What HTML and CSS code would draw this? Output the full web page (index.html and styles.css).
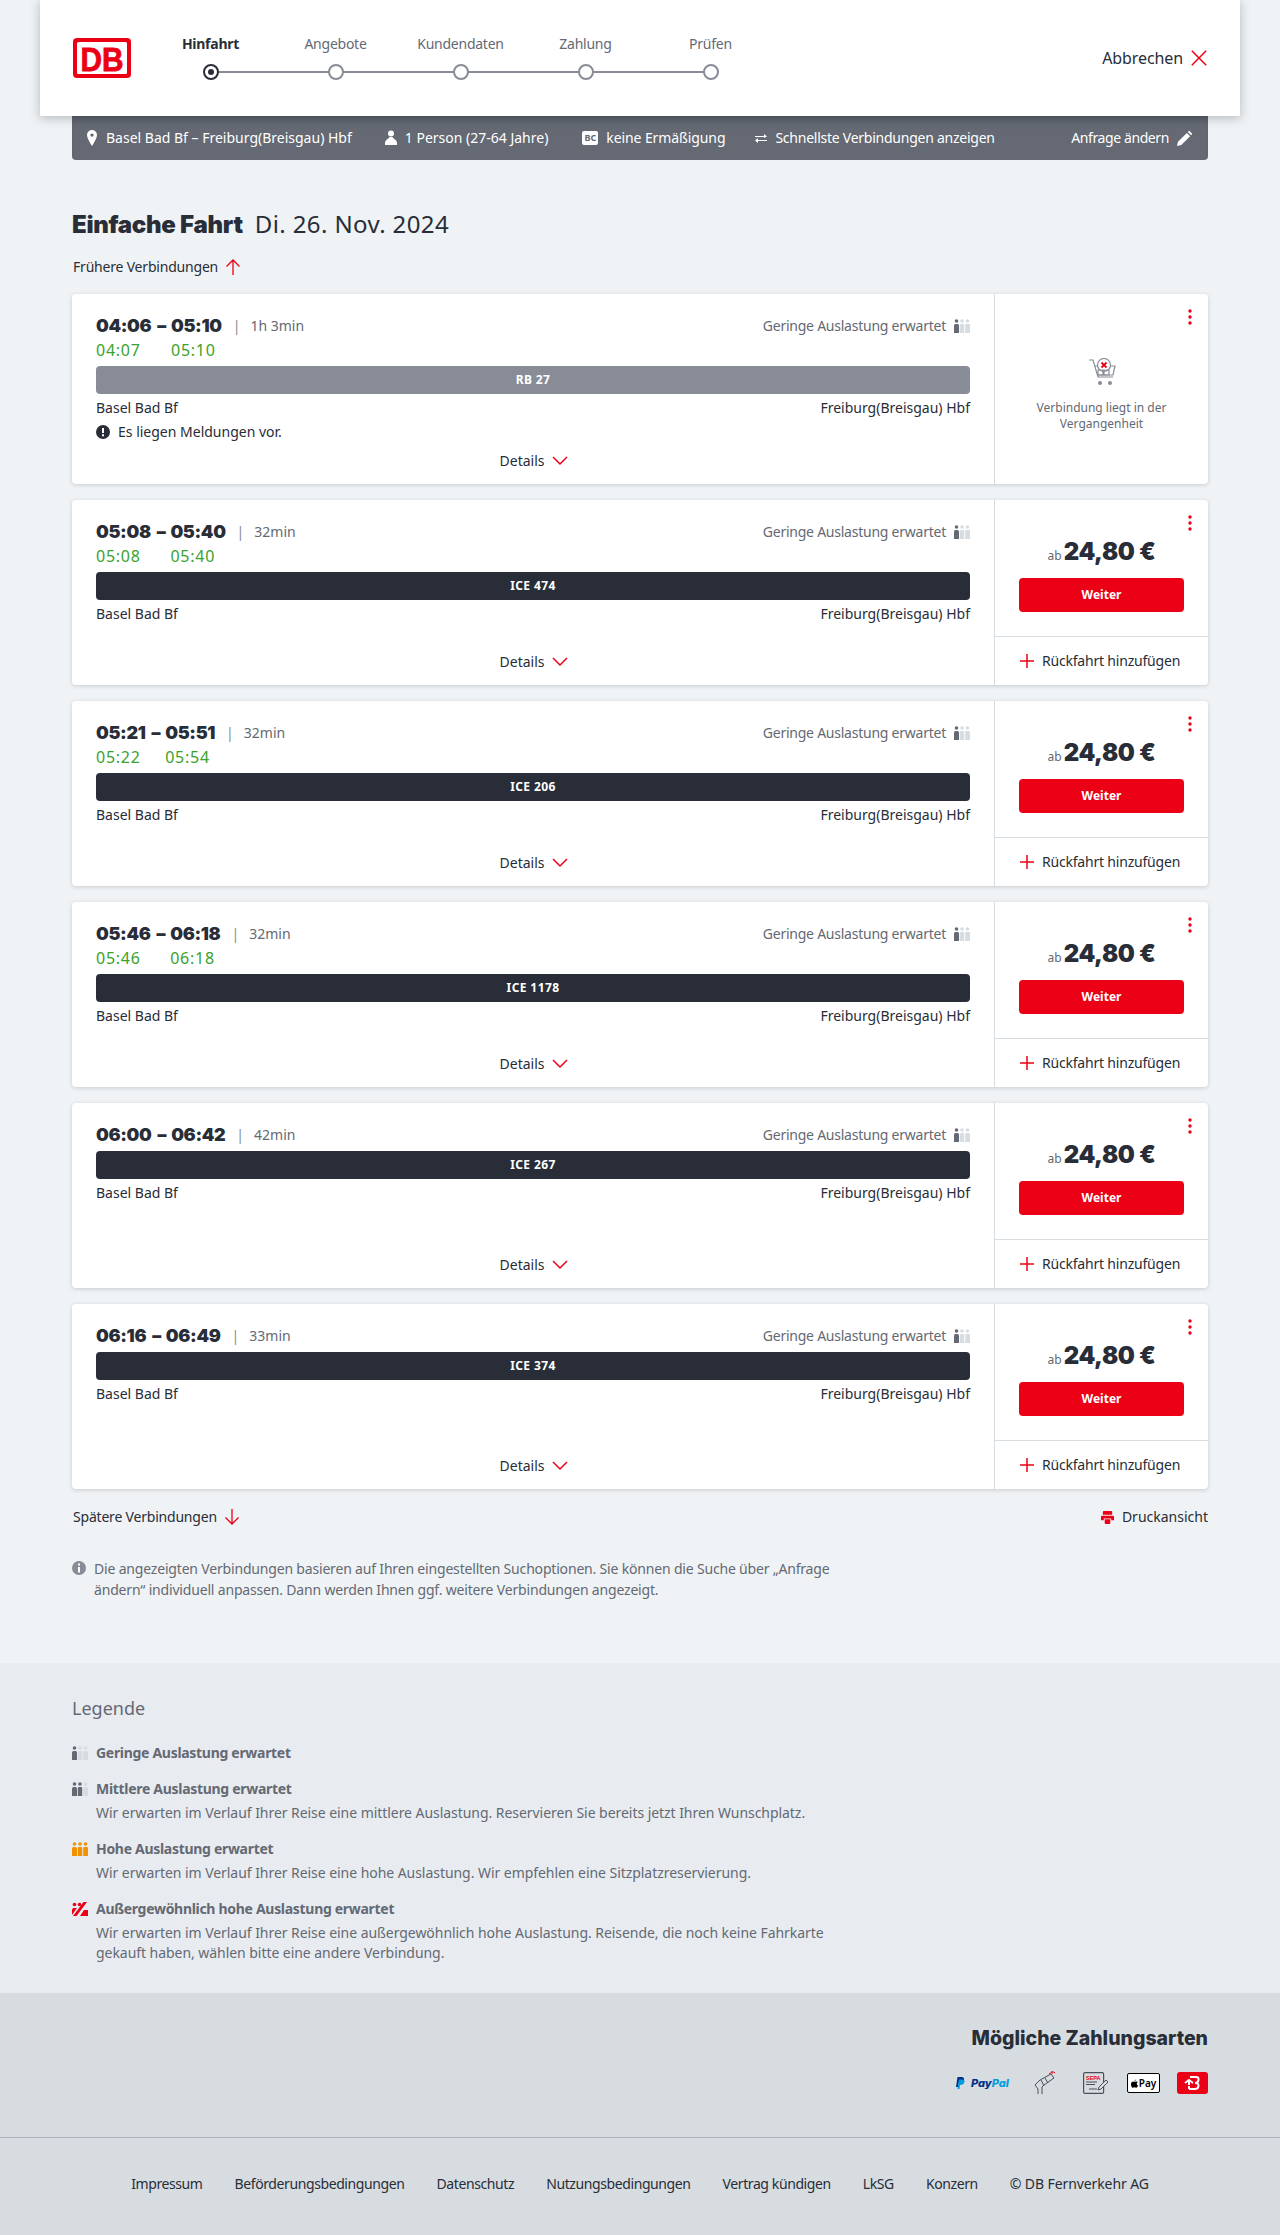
FILE: index.html
```html
<!DOCTYPE html>
<html lang="de">
<head>
<meta charset="utf-8">
<title>Verbindungen</title>
<link rel="stylesheet" href="styles.css">
</head>
<body>
<svg class="sprite" xmlns="http://www.w3.org/2000/svg">
  <symbol id="occ1" viewBox="0 0 16 14"><g fill="#646973"><circle cx="2.500" cy="2" r="1.800"/><path d="M0 6.500Q0 5 1.500 5h2Q5 5 5 6.500V14H0z"/></g><g fill="#d7dce1"><circle cx="8" cy="2" r="1.800"/><path d="M5.800 6Q5.800 5 7 5h2q1.200 0 1.200 1V14H5.800z"/><circle cx="13.500" cy="2" r="1.800"/><path d="M11.200 6q0-1 1.200-1h2.400q1.200 0 1.200 1v8h-4.800z"/></g></symbol>
  <symbol id="occ2" viewBox="0 0 16 14"><g fill="#646973"><circle cx="2.500" cy="2" r="1.800"/><path d="M0 6.500Q0 5 1.500 5h2Q5 5 5 6.500V14H0z"/><circle cx="8" cy="2" r="1.800"/><path d="M5.800 6Q5.800 5 7 5h2q1.200 0 1.200 1V14H5.800z"/></g><g fill="#d7dce1"><circle cx="13.500" cy="2" r="1.800"/><path d="M11.200 6q0-1 1.200-1h2.400q1.200 0 1.200 1v8h-4.800z"/></g></symbol>
  <symbol id="occ3" viewBox="0 0 16 14"><g fill="#f39200"><circle cx="2.500" cy="2" r="1.800"/><path d="M0 6.500Q0 5 1.500 5h2Q5 5 5 6.500V14H0z"/><circle cx="8" cy="2" r="1.800"/><path d="M5.800 6Q5.800 5 7 5h2q1.200 0 1.200 1V14H5.800z"/><circle cx="13.500" cy="2" r="1.800"/><path d="M11.200 6q0-1 1.200-1h2.400q1.200 0 1.200 1v8h-4.800z"/></g></symbol>
  <symbol id="occ4" viewBox="0 0 16 14"><g fill="#ec0016"><circle cx="2.500" cy="2.500" r="1.800"/><circle cx="7.500" cy="2.500" r="1.800"/><path d="M0 8q0-2 2-2h3L0 13z"/><path d="M1 14L11.500 0H15L4.500 14zM8 14l4-6h4v6z"/></g></symbol>
  <symbol id="chev" viewBox="0 0 16 10"><path d="M1 1l7 7 7-7" fill="none" stroke="#ec0016" stroke-width="1.500"/></symbol>
  <symbol id="plus" viewBox="0 0 14 14"><path d="M7 0v14M0 7h14" fill="none" stroke="#ec0016" stroke-width="1.500"/></symbol>
  <symbol id="dots" viewBox="0 0 4 16"><g fill="#ec0016"><circle cx="2" cy="2" r="1.700"/><circle cx="2" cy="8" r="1.700"/><circle cx="2" cy="14" r="1.700"/></g></symbol>
</svg>

<header class="topbar">
  <svg class="logo" viewBox="0 0 58 40" aria-label="DB"><rect x="0" y="0" width="58" height="40" rx="4" fill="#ec0016"/><rect x="4" y="4" width="50" height="32" rx="1.500" fill="#fff"/><text x="29" y="32.500" text-anchor="middle" font-family="Liberation Sans" font-weight="700" font-size="33" textLength="43" lengthAdjust="spacingAndGlyphs" fill="#ec0016" stroke="#ec0016" stroke-width=".8">DB</text></svg>
  <ol class="steps">
    <li class="step step-active"><span class="step-label">Hinfahrt</span><span class="step-dot"></span></li>
    <li class="step"><span class="step-label">Angebote</span><span class="step-dot"></span></li>
    <li class="step"><span class="step-label">Kundendaten</span><span class="step-dot"></span></li>
    <li class="step"><span class="step-label">Zahlung</span><span class="step-dot"></span></li>
    <li class="step step-last"><span class="step-label">Prüfen</span><span class="step-dot"></span></li>
  </ol>
  <div class="cancel">Abbrechen
    <svg class="cancel-x" viewBox="0 0 16 16"><path d="M.8.8l14.400 14.400M15.200.8L.8 15.200" fill="none" stroke="#ec0016" stroke-width="1.500"/></svg>
  </div>
</header>

<main class="wrap">
  <div class="summary">
    <span class="sum-item sum-route"><svg class="sum-icon" viewBox="0 0 12 16"><path fill="#fff" fill-rule="evenodd" d="M6 0a5 5 0 0 1 5 5c0 3.500-5 11-5 11S1 8.500 1 5a5 5 0 0 1 5-5zm0 3.400A1.700 1.700 0 1 0 6 6.800 1.700 1.700 0 0 0 6 3.400z"/></svg>Basel Bad Bf – Freiburg(Breisgau) Hbf</span>
    <span class="sum-item sum-person"><svg class="sum-icon" viewBox="0 0 12 16"><circle cx="6" cy="3.500" r="3" fill="#fff"/><path fill="#fff" d="M4.500 7h3c.8 1.800 4.500 3 4.500 6v2H0v-2c0-3 3.700-4.200 4.500-6z"/></svg>1 Person (27-64 Jahre)</span>
    <span class="sum-item sum-bc"><span class="bc-badge">BC</span>keine Ermäßigung</span>
    <span class="sum-item sum-swap"><svg class="sum-icon swap-icon" viewBox="0 0 12 10"><path fill="#fff" d="M0 3h9V1l3 2.500L9 5V4H0zM12 7H3V5L0 7.500 3 10V8h9z"/></svg>Schnellste Verbindungen anzeigen</span>
    <span class="sum-item sum-edit">Anfrage ändern<svg class="pencil" viewBox="0 0 16 16"><path fill="#fff" d="M0 16l1-4.500L10.500 2l3.500 3.500L4.500 15zM11.500 1l1-1 .8 0 2.700 2.700v.8l-1 1z"/></svg></span>
  </div>

  <h1 class="title"><b>Einfache Fahrt</b><span class="title-date">Di. 26. Nov. 2024</span></h1>

  <div class="linkline link-top">Frühere Verbindungen
    <svg class="arrow" viewBox="0 0 16 16"><path d="M8 16V1M1.500 7.500L8 1l6.500 6.500" fill="none" stroke="#ec0016" stroke-width="1.300"/></svg>
  </div>

  <section class="cards">
    <article class="card">
      <div class="card-main">
        <div class="times">
          <span class="t">04:06</span><span class="t dash">–</span><span class="t">05:10</span>
          <span class="dur"><span class="pipe">|</span>1h 3min</span>
          <span class="occ">Geringe Auslastung erwartet<svg class="occ-icon"><use href="#occ1"/></svg></span>
          <span class="rt rt-a">04:07</span><span class="rt rt-b">05:10</span>
        </div>
        <div class="trainbar trainbar-rb">RB 27</div>
        <div class="stations"><span>Basel Bad Bf</span><span>Freiburg(Breisgau) Hbf</span></div>
        <div class="notice"><svg class="notice-icon" viewBox="0 0 14 14"><circle cx="7" cy="7" r="7" fill="#282d37"/><path d="M6 3h2v5H6zM6 9.300h2v2H6z" fill="#fff"/></svg>Es liegen Meldungen vor.</div>
        <div class="details">Details<svg class="chev"><use href="#chev"/></svg></div>
      </div>
      <div class="card-side card-past">
        <svg class="dots"><use href="#dots"/></svg>
        <svg class="cart" viewBox="0 0 28 28"><g fill="none" stroke="#878c96" stroke-width="1.200"><path d="M1 2h4l5 17h15"/><path d="M7 8h20l-2 9H10"/><circle cx="16" cy="7" r="6.500" fill="#fff"/><path d="M10 12h5v5h-5zM16 12h5v5h-5z"/></g><path d="M13.500 4.500l5 5M18.500 4.500l-5 5" stroke="#ec0016" stroke-width="1.800"/><circle cx="12" cy="25" r="2" fill="#878c96"/><circle cx="22" cy="25" r="2" fill="#878c96"/></svg>
        <p class="past-text">Verbindung liegt in der Vergangenheit</p>
      </div>
    </article>

    <article class="card">
      <div class="card-main">
        <div class="times">
          <span class="t">05:08</span><span class="t dash">–</span><span class="t">05:40</span>
          <span class="dur"><span class="pipe">|</span>32min</span>
          <span class="occ">Geringe Auslastung erwartet<svg class="occ-icon"><use href="#occ1"/></svg></span>
          <span class="rt rt-a">05:08</span><span class="rt rt-b">05:40</span>
        </div>
        <div class="trainbar">ICE 474</div>
        <div class="stations"><span>Basel Bad Bf</span><span>Freiburg(Breisgau) Hbf</span></div>
        <div class="details">Details<svg class="chev"><use href="#chev"/></svg></div>
      </div>
      <div class="card-side">
        <svg class="dots"><use href="#dots"/></svg>
        <div class="offer"><div class="price"><span class="ab">ab</span><b>24,80 €</b></div><div class="btn">Weiter</div></div>
        <div class="return"><svg class="plus"><use href="#plus"/></svg>Rückfahrt hinzufügen</div>
      </div>
    </article>

    <article class="card">
      <div class="card-main">
        <div class="times">
          <span class="t">05:21</span><span class="t dash">–</span><span class="t">05:51</span>
          <span class="dur"><span class="pipe">|</span>32min</span>
          <span class="occ">Geringe Auslastung erwartet<svg class="occ-icon"><use href="#occ1"/></svg></span>
          <span class="rt rt-a">05:22</span><span class="rt rt-b">05:54</span>
        </div>
        <div class="trainbar">ICE 206</div>
        <div class="stations"><span>Basel Bad Bf</span><span>Freiburg(Breisgau) Hbf</span></div>
        <div class="details">Details<svg class="chev"><use href="#chev"/></svg></div>
      </div>
      <div class="card-side">
        <svg class="dots"><use href="#dots"/></svg>
        <div class="offer"><div class="price"><span class="ab">ab</span><b>24,80 €</b></div><div class="btn">Weiter</div></div>
        <div class="return"><svg class="plus"><use href="#plus"/></svg>Rückfahrt hinzufügen</div>
      </div>
    </article>

    <article class="card">
      <div class="card-main">
        <div class="times">
          <span class="t">05:46</span><span class="t dash">–</span><span class="t">06:18</span>
          <span class="dur"><span class="pipe">|</span>32min</span>
          <span class="occ">Geringe Auslastung erwartet<svg class="occ-icon"><use href="#occ1"/></svg></span>
          <span class="rt rt-a">05:46</span><span class="rt rt-b">06:18</span>
        </div>
        <div class="trainbar">ICE 1178</div>
        <div class="stations"><span>Basel Bad Bf</span><span>Freiburg(Breisgau) Hbf</span></div>
        <div class="details">Details<svg class="chev"><use href="#chev"/></svg></div>
      </div>
      <div class="card-side">
        <svg class="dots"><use href="#dots"/></svg>
        <div class="offer"><div class="price"><span class="ab">ab</span><b>24,80 €</b></div><div class="btn">Weiter</div></div>
        <div class="return"><svg class="plus"><use href="#plus"/></svg>Rückfahrt hinzufügen</div>
      </div>
    </article>

    <article class="card">
      <div class="card-main">
        <div class="times">
          <span class="t">06:00</span><span class="t dash">–</span><span class="t">06:42</span>
          <span class="dur"><span class="pipe">|</span>42min</span>
          <span class="occ">Geringe Auslastung erwartet<svg class="occ-icon"><use href="#occ1"/></svg></span>
        </div>
        <div class="trainbar">ICE 267</div>
        <div class="stations"><span>Basel Bad Bf</span><span>Freiburg(Breisgau) Hbf</span></div>
        <div class="details">Details<svg class="chev"><use href="#chev"/></svg></div>
      </div>
      <div class="card-side">
        <svg class="dots"><use href="#dots"/></svg>
        <div class="offer"><div class="price"><span class="ab">ab</span><b>24,80 €</b></div><div class="btn">Weiter</div></div>
        <div class="return"><svg class="plus"><use href="#plus"/></svg>Rückfahrt hinzufügen</div>
      </div>
    </article>

    <article class="card">
      <div class="card-main">
        <div class="times">
          <span class="t">06:16</span><span class="t dash">–</span><span class="t">06:49</span>
          <span class="dur"><span class="pipe">|</span>33min</span>
          <span class="occ">Geringe Auslastung erwartet<svg class="occ-icon"><use href="#occ1"/></svg></span>
        </div>
        <div class="trainbar">ICE 374</div>
        <div class="stations"><span>Basel Bad Bf</span><span>Freiburg(Breisgau) Hbf</span></div>
        <div class="details">Details<svg class="chev"><use href="#chev"/></svg></div>
      </div>
      <div class="card-side">
        <svg class="dots"><use href="#dots"/></svg>
        <div class="offer"><div class="price"><span class="ab">ab</span><b>24,80 €</b></div><div class="btn">Weiter</div></div>
        <div class="return"><svg class="plus"><use href="#plus"/></svg>Rückfahrt hinzufügen</div>
      </div>
    </article>
  </section>

  <div class="after-cards">
    <div class="linkline">Spätere Verbindungen
      <svg class="arrow" viewBox="0 0 16 16"><path d="M8 0v15M1.500 8.500L8 15l6.500-6.500" fill="none" stroke="#ec0016" stroke-width="1.300"/></svg>
    </div>
    <div class="print"><svg class="print-icon" viewBox="0 0 14 14"><path fill="#ec0016" fill-rule="evenodd" d="M3 0h8q1 0 1 1v3H2V1q0-1 1-1zM1.500 5h11q1.500 0 1.500 1.500V10h-3V8H3v2H0V6.500Q0 5 1.500 5zM4 9h6v4q0 1-1 1H5q-1 0-1-1z"/></svg>Druckansicht</div>
  </div>

  <div class="info"><svg class="info-icon" viewBox="0 0 14 14"><circle cx="7" cy="7" r="7" fill="#878c96"/><path d="M6 6h2v5.500H6zM6 2.500h2v2H6z" fill="#fff"/></svg>
    <p>Die angezeigten Verbindungen basieren auf Ihren eingestellten Suchoptionen. Sie können die Suche über „Anfrage ändern“ individuell anpassen. Dann werden Ihnen ggf. weitere Verbindungen angezeigt.</p>
  </div>
</main>

<section class="legend">
  <h2 class="legend-title">Legende</h2>
  <div class="leg-item"><svg class="leg-icon"><use href="#occ1"/></svg><div><b>Geringe Auslastung erwartet</b></div></div>
  <div class="leg-item"><svg class="leg-icon"><use href="#occ2"/></svg><div><b>Mittlere Auslastung erwartet</b><p>Wir erwarten im Verlauf Ihrer Reise eine mittlere Auslastung. Reservieren Sie bereits jetzt Ihren Wunschplatz.</p></div></div>
  <div class="leg-item"><svg class="leg-icon"><use href="#occ3"/></svg><div><b>Hohe Auslastung erwartet</b><p>Wir erwarten im Verlauf Ihrer Reise eine hohe Auslastung. Wir empfehlen eine Sitzplatzreservierung.</p></div></div>
  <div class="leg-item"><svg class="leg-icon"><use href="#occ4"/></svg><div><b>Außergewöhnlich hohe Auslastung erwartet</b><p>Wir erwarten im Verlauf Ihrer Reise eine außergewöhnlich hohe Auslastung. Reisende, die noch keine Fahrkarte gekauft haben, wählen bitte eine andere Verbindung.</p></div></div>
</section>

<footer class="foot">
  <div class="pay">
    <h2 class="pay-title">Mögliche Zahlungsarten</h2>
    <div class="pay-icons">
      <svg class="pay-paypal" viewBox="0 0 56 12"><path fill="#003087" d="M1.500 0h4q3 0 2.500 3T4 6H2.500L2 10H0z"/><path fill="#009cde" d="M3 2.500h3.500q2.500 0 2 2.500T5 8H4l-.5 4h-2z"/><text x="15" y="9.500" font-family="Inter" font-size="11" font-style="italic" font-weight="800" fill="#003087">Pay<tspan fill="#009cde">Pal</tspan></text></svg>
      <svg class="pay-contact" viewBox="0 0 22 24"><g fill="none" stroke="#4a4f59" stroke-width="1"><path d="M1 14l5-5 11-6 3 4-10 7-2 2v7M4 23v-5L1 14"/><path d="M7 9l3 6M11 7l3 5"/></g><path d="M15 3q2-2 4-1M17 1q2-1 4 1" fill="none" stroke="#ec0016" stroke-width="1"/></svg>
      <svg class="pay-sepa" viewBox="0 0 26 22"><rect x=".6" y=".6" width="20" height="20.800" rx="1.500" fill="none" stroke="#4a4f59" stroke-width="1.200"/><text x="3" y="7.500" font-family="Liberation Sans" font-size="5.500" font-weight="700" fill="#ec0016">SEPA</text><path d="M3 10h11M3 12.500h9M6 17h8" stroke="#4a4f59"/><path d="M15 18l1-3 7-7 2 2-7 7z" fill="#d7dce1" stroke="#4a4f59"/></svg>
      <span class="pay-apple"><svg class="apple-mark" viewBox="0 0 10 12"><path fill="#000" d="M7 0q0 2-2 3 0-2 2-3zM5 3.500c1 0 1.500-.5 2.500-.5s2 .8 2 1.200c-2 1.200-1.500 3.800.5 4.500-.5 1.500-1.500 3.300-2.500 3.300s-1.500-.5-2.500-.5-1.500.5-2.500.5C1 12 0 9 0 7c0-2.500 1.500-4 3-4 .8 0 1.300.5 2 .5z"/></svg>Pay</span>
      <svg class="pay-red" viewBox="0 0 31 22"><rect width="31" height="22" rx="3" fill="#ec0016"/><path d="M13 5h6q3 0 2.500 3T18 11q4 0 3.500 3T18 17h-6M12 17v-3M8 11l4-3 4 3M12 8v5" fill="none" stroke="#fff" stroke-width="2"/></svg>
    </div>
  </div>
  <nav class="foot-links">
    <span>Impressum</span><span>Beförderungsbedingungen</span><span>Datenschutz</span><span>Nutzungsbedingungen</span><span>Vertrag kündigen</span><span>LkSG</span><span>Konzern</span><span>© DB Fernverkehr AG</span>
  </nav>
</footer>
</body>
</html>
```
FILE: styles.css
```css
* { box-sizing: border-box; }
html, body { margin: 0; padding: 0; }
body {
  background: #f0f3f5;
  color: #282d37;
  font-family: "Noto Sans", "Open Sans", sans-serif;
  font-size: 14px;
  line-height: 20px;
}
.sprite { display: none; }
svg { display: block; flex: none; }
p, h1, h2, ol { margin: 0; padding: 0; }

/* top bar */
.topbar {
  position: relative;
  z-index: 2;
  display: flex;
  align-items: flex-start;
  height: 116px;
  margin: 0 40px;
  padding: 34px 33px 0;
  background: #fff;
  box-shadow: 0 2px 10px rgba(40, 45, 55, .3);
}
.logo { width: 58px; height: 40px; margin-top: 4px; }
.steps { display: flex; list-style: none; margin-left: 17px; }
.step {
  position: relative;
  display: flex;
  flex-direction: column;
  align-items: center;
  width: 125px;
  color: #646973;
  letter-spacing: -.25px;
}
.step-label { height: 20px; }
.step-active .step-label { font-weight: 700; color: #282d37; }
.step-dot {
  position: relative;
  z-index: 1;
  width: 16px;
  height: 16px;
  margin-top: 10px;
  border: 2px solid #878c96;
  border-radius: 50%;
  background: #fff;
}
.step::after {
  content: "";
  position: absolute;
  left: 50%;
  top: 37px;
  width: 125px;
  height: 2px;
  background: #878c96;
}
.step-last::after { display: none; }
.step-active .step-dot { border-color: #282d37; }
.step-active .step-dot::after {
  content: "";
  position: absolute;
  left: 3px;
  top: 3px;
  width: 6px;
  height: 6px;
  border-radius: 50%;
  background: #282d37;
}
.cancel {
  display: flex;
  align-items: center;
  gap: 8px;
  margin-left: auto;
  margin-top: 14px;
  font-size: 16px;
  line-height: 20px;
  letter-spacing: -.1px;
}
.cancel-x { width: 16px; height: 16px; }

/* main */
.wrap { margin: 0 72px; }
.summary {
  display: flex;
  align-items: center;
  height: 44px;
  padding: 0 16px 0 14px;
  background: #646973;
  color: #fff;
  border-radius: 0 0 4px 4px;
  box-shadow: inset 0 6px 6px -4px rgba(40, 45, 55, .35);
}
.sum-item { display: flex; align-items: center; gap: 8px; }
.sum-person { margin-left: 33px; }
.sum-bc { margin-left: 34px; letter-spacing: -.1px; }
.sum-swap { margin-left: 30px; letter-spacing: -.25px; }
.sum-edit { margin-left: auto; letter-spacing: -.4px; }
.sum-icon { width: 12px; height: 16px; }
.swap-icon { height: 10px; }
.bc-badge {
  display: block;
  width: 16px;
  height: 14px;
  border-radius: 2px;
  background: #fff;
  color: #646973;
  font-size: 9px;
  line-height: 14px;
  font-weight: 700;
  text-align: center;
}
.pencil { width: 15px; height: 15px; }
.title {
  display: flex;
  align-items: baseline;
  gap: 12px;
  margin-top: 48px;
  font-size: 24px;
  line-height: 32px;
  font-weight: 400;
}
.title b { font-weight: 900; font-family: "Inter", sans-serif; letter-spacing: -.3px; }
.title-date { letter-spacing: .4px; }
.linkline {
  display: flex;
  align-items: center;
  gap: 7px;
  padding-left: 1px;
  line-height: 20px;
  letter-spacing: -.2px;
}
.link-top { margin-top: 16px; margin-bottom: 17px; }
.arrow { width: 16px; height: 16px; }

/* cards */
.cards { display: flex; flex-direction: column; gap: 16px; }
.card {
  display: grid;
  grid-template-columns: 922px 1fr;
  min-height: 185px;
  background: #fff;
  border-radius: 4px;
  box-shadow: 0 1px 4px rgba(40, 45, 55, .2);
}
.card-main {
  display: flex;
  flex-direction: column;
  padding: 20px 24px 11px;
}
.times {
  display: grid;
  grid-template-columns: auto auto auto 1fr auto;
  grid-auto-rows: 24px;
  align-items: center;
  justify-content: start;
}
.t { font-family: "Inter", sans-serif; font-weight: 900; font-size: 18px; letter-spacing: -.35px; }
.dash { padding: 0 5px 0 6px; }
.dur { display: flex; align-items: center; color: #646973; font-size: 14px; }
.pipe { margin: 0 10px 0 11px; color: #878c96; }
.occ { display: flex; align-items: center; gap: 8px; color: #646973; grid-column: 5; letter-spacing: -.24px; }
.occ-icon { width: 16px; height: 14px; }
.rt { color: #3ba22c; font-size: 16px; letter-spacing: .75px; grid-row: 2; }
.rt-a { grid-column: 1; }
.rt-b { grid-column: 3; }
.trainbar {
  height: 28px;
  margin-top: 4px;
  border-radius: 4px;
  background: #282d37;
  color: #fff;
  font-size: 12px;
  font-weight: 700;
  letter-spacing: .4px;
  line-height: 28px;
  text-align: center;
}
.trainbar-rb { background: #878c96; }
.stations {
  display: flex;
  justify-content: space-between;
  margin-top: 2px;
  line-height: 24px;
}
.notice { display: flex; align-items: center; gap: 8px; line-height: 24px; }
.notice-icon { width: 14px; height: 14px; }
.details {
  display: flex;
  align-items: center;
  justify-content: center;
  gap: 8px;
  margin-top: auto;
  padding-top: 5px;
  padding-left: 2px;
  line-height: 24px;
}
.chev { width: 16px; height: 10px; }

/* side */
.card-side {
  position: relative;
  display: flex;
  flex-direction: column;
  border-left: 1px solid #d7dce1;
}
.dots {
  position: absolute;
  right: 16px;
  top: 15px;
  width: 4px;
  height: 16px;
}
.card-past { align-items: center; padding: 64px 24px 0; }
.cart { width: 28px; height: 28px; }
.past-text {
  margin-top: 14px;
  color: #646973;
  font-size: 12px;
  line-height: 16px;
  text-align: center;
}
.offer { padding: 38px 24px 24px; }
.price {
  display: flex;
  align-items: baseline;
  justify-content: center;
  gap: 2px;
  height: 28px;
  line-height: 28px;
}
.ab { color: #646973; font-size: 12px; }
.price b { font-family: "Inter", sans-serif; font-weight: 900; font-size: 24px; letter-spacing: -.35px; }
.btn {
  height: 34px;
  margin-top: 12px;
  border-radius: 4px;
  background: #ec0016;
  color: #fff;
  font-size: 12px;
  font-weight: 700;
  line-height: 34px;
  text-align: center;
}
.return {
  display: flex;
  align-items: center;
  gap: 8px;
  flex: 1;
  padding-left: 25px;
  border-top: 1px solid #d7dce1;
  letter-spacing: -.2px;
}
.plus { width: 14px; height: 14px; }

.after-cards {
  display: flex;
  justify-content: space-between;
  margin-top: 18px;
}
.print { display: flex; align-items: center; gap: 8px; }
.print-icon { width: 13px; height: 13px; }
.info {
  display: flex;
  gap: 8px;
  width: 760px;
  margin-top: 31px;
  color: #646973;
  line-height: 21px;
  letter-spacing: -.18px;
}
.info-icon { width: 14px; height: 14px; margin-top: 3px; }

/* legend */
.legend {
  margin-top: 63px;
  height: 330px;
  padding: 31px 72px 0;
  background: #e8ecf1;
  color: #646973;
}
.legend-title { font-size: 18px; font-weight: 400; line-height: 28px; margin-bottom: 21px; }
.leg-item {
  display: flex;
  gap: 8px;
  width: 760px;
  margin-bottom: 16px;
  line-height: 20px;
}
.leg-item b { display: block; font-weight: 700; letter-spacing: -.3px; }
.leg-item p { margin-top: 4px; letter-spacing: -.05px; }
.leg-icon { width: 16px; height: 14px; margin-top: 3px; }

/* footer */
.foot { background: #d7dce1; height: 242px; }
.pay {
  display: flex;
  flex-direction: column;
  align-items: flex-end;
  height: 145px;
  padding: 30px 72px 0;
  border-bottom: 1px solid #afb4bb;
}
.pay-title { font-family: "Inter", sans-serif; font-size: 19.500px; font-weight: 800; line-height: 30px; }
.pay-icons { display: flex; align-items: center; margin-top: 18px; }
.pay-paypal { width: 56px; height: 12px; }
.pay-contact { width: 22px; height: 24px; margin-left: 22px; }
.pay-sepa { width: 26px; height: 22px; margin-left: 27px; }
.pay-apple {
  display: flex;
  align-items: center;
  justify-content: center;
  gap: 1px;
  width: 33px;
  height: 20px;
  margin-left: 18px;
  border: 1px solid #000;
  border-radius: 2px;
  background: #fff;
  color: #000;
  font-size: 10px;
  font-weight: 600;
}
.apple-mark { width: 7px; height: 9px; }
.pay-red { width: 31px; height: 22px; margin-left: 17px; }
.foot-links {
  display: flex;
  justify-content: center;
  gap: 32px;
  margin-top: 36px;
  line-height: 20px;
  letter-spacing: -.4px;
}
.foot-links span:last-child { letter-spacing: -.1px; }
```
